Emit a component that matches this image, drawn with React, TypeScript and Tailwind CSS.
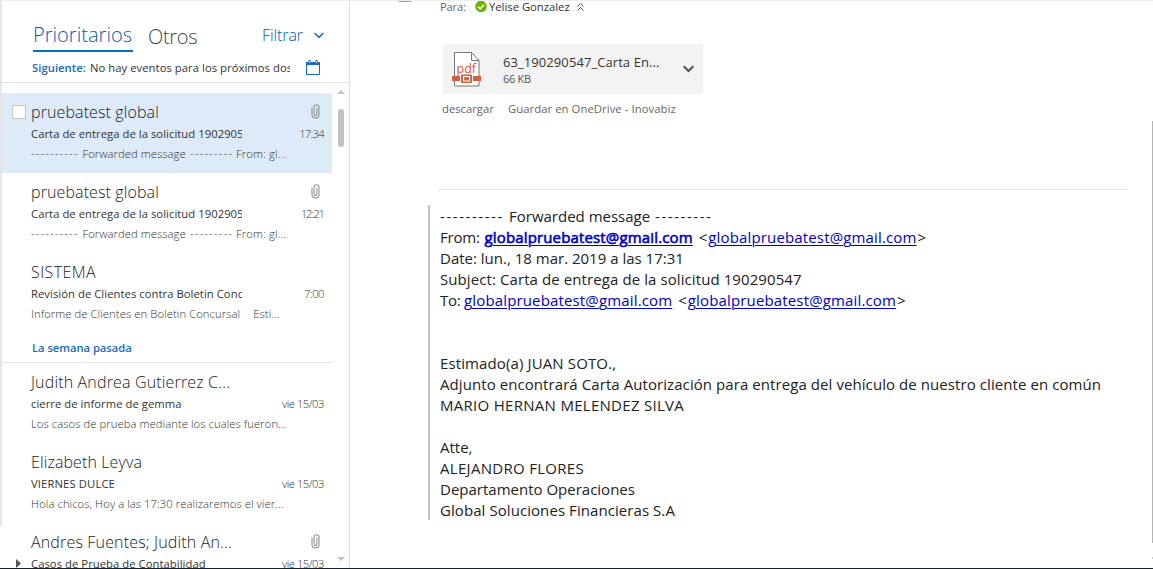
import type { ReactNode } from "react";

function Clip() {
  return (
    <svg className="h-[15px] w-[9px]" viewBox="0 0 9 15" fill="none" stroke="#929292" strokeWidth="1.1">
      <path d="M5.9 4v6.2a1.4 1.4 0 0 1-2.8 0V4.4" />
      <path d="M3.1 4.6V3a2.2 2.2 0 0 1 2.2-2.2A2.7 2.7 0 0 1 8 3.5v6.9a3.5 3.5 0 0 1-7 0V3.6" />
    </svg>
  );
}

type Mail = {
  from: string;
  fromTracking: string;
  subject: string;
  subjectTracking?: string;
  time: string;
  timeTracking: string;
  preview: ReactNode;
  clip?: boolean;
  selected?: boolean;
  thread?: boolean;
};

const forwarded = (
  <div className="flex whitespace-pre">
    <span className="w-[51.5px] tracking-[1.12px]">----------</span>
    <span className="w-[107.5px] tracking-[0.06px]">Forwarded message</span>
    <span className="w-[46px] tracking-[1.15px]">---------</span>
    <span className="tracking-[0.15px]">From: gl...</span>
  </div>
);

const recent: Mail[] = [
  { from: "pruebatest global", fromTracking: "tracking-[0.11px]", subject: "Carta de entrega de la solicitud 190290547", time: "17:34", timeTracking: "tracking-[-0.7px]", preview: forwarded, clip: true, selected: true },
  { from: "pruebatest global", fromTracking: "tracking-[0.11px]", subject: "Carta de entrega de la solicitud 190290547", time: "12:21", timeTracking: "tracking-[-1px]", preview: forwarded, clip: true },
  { from: "SISTEMA", fromTracking: "tracking-[0.4px]", subject: "Revisión de Clientes contra Boletin Concursal", time: "7:00", timeTracking: "tracking-[-0.5px]", preview: <div className="flex gap-[13px] tracking-[0.08px]"><span>Informe de Clientes en Boletin Concursal</span><span>Esti...</span></div> },
];

const older: Mail[] = [
  { from: "Judith Andrea Gutierrez C...", fromTracking: "tracking-[0.16px]", subject: "cierre de informe de gemma", time: "vie 15/03", timeTracking: "tracking-[-0.48px]", preview: "Los casos de prueba mediante los cuales fueron..." },
  { from: "Elizabeth Leyva", fromTracking: "tracking-[0.11px]", subject: "VIERNES DULCE", subjectTracking: "tracking-[0.12px]", time: "vie 15/03", timeTracking: "tracking-[-0.48px]", preview: "Hola chicos, Hoy a las 17:30 realizaremos el vier..." },
  { from: "Andres Fuentes; Judith An...", fromTracking: "tracking-[0.16px]", subject: "Casos de Prueba de Contabilidad", time: "vie 15/03", timeTracking: "tracking-[-0.48px]", preview: "", clip: true, thread: true },
];

function Row({ m }: { m: Mail }) {
  return (
    <div className={"flex h-20 w-[330px] shrink-0 pt-2 " + (m.selected ? "bg-[#dcebf7]" : "")}>
      <div className="w-[29px] shrink-0 pl-[10px]">
        {m.selected && <div className="mt-1 size-[14px] border border-[#c6c6c6] bg-white" />}
        {m.thread && (
          <svg className="mt-[28px] ml-[4px] h-[9px] w-[5px]" viewBox="0 0 5 9">
            <path d="M0 0l5 4.5L0 9z" fill="#555" />
          </svg>
        )}
      </div>
      <div className="w-[293px] whitespace-nowrap text-[11.25px] leading-5">
        <div className="flex h-[23px] items-start justify-between">
          <span className={"text-[16px] leading-[23px] font-light text-[#222] " + m.fromTracking}>{m.from}</span>
          {m.clip && <div className="pt-[3px] pr-[4px]"><Clip /></div>}
        </div>
        <div className="flex h-5 justify-between">
          <div className={"w-[211px] overflow-hidden text-[#333] " + (m.subjectTracking ?? "tracking-[0.05px]")}>{m.subject}</div>
          <div className={"font-light text-[#333] " + m.timeTracking}>{m.time}</div>
        </div>
        <div className="h-5 font-light tracking-[0.07px] text-[#333]">{m.preview}</div>
      </div>
    </div>
  );
}

function Sidebar() {
  return (
    <div className="flex w-[350px] shrink-0 border-r border-[#dcdcdc]">
      <div className="h-[525px] w-[2px] shrink-0 bg-[#e6e6e6]" />
      <div className="flex h-[567px] w-[347px] shrink-0 flex-col overflow-hidden">
        <div className="h-[82px] shrink-0 border-b border-[#e1e1e1]">
          <div className="flex h-[51px] pl-[31px] font-light whitespace-nowrap">
            <div className="mt-[19px] w-[100px] border-b-2 border-[#0072c6] text-[20px] leading-[30px] tracking-[0.03px] text-[#005cb8]">Prioritarios</div>
            <div className="mt-[21px] ml-[15px] w-[114px] text-[20px] leading-[30px] tracking-[-0.3px] text-[#444]">Otros</div>
            <div className="mt-[19px] w-[52px] text-[16px] leading-[30px] tracking-[-0.08px] text-[#005cb8]">Filtrar</div>
            <svg className="mt-[31px] h-[7px] w-[10px]" viewBox="0 0 10 7" fill="none" stroke="#1769c0" strokeWidth="1.5">
              <path d="M.6 1L5 5.4 9.400 1" />
            </svg>
          </div>
          <div className="flex pl-[30px] text-[11.25px] leading-5 whitespace-nowrap">
            <div className="mt-[6px] w-[58px] font-semibold tracking-[0.05px] text-[#1769c0]">Siguiente:</div>
            <div className="mt-[6px] w-[200px] overflow-hidden tracking-[0.05px] text-[#333]">No hay eventos para los próximos dos días</div>
            <svg className="mt-[8px] ml-[16px] h-[15px] w-[14px]" viewBox="0 0 14 15">
              <path d="M.5 2.500h13v12h-13z" fill="none" stroke="#1769c0" />
              <path d="M0 2h14v3H0zM2.500 0h2v2h-2zM9.500 0h2v2h-2z" fill="#1769c0" />
              <path d="M3 1.500h1v1.500H3zM10 1.500h1v1.500h-1z" fill="#fff" />
            </svg>
          </div>
        </div>
        <div className="flex flex-1">
          <div className="w-[330px] pt-[10px]">
            {recent.map((m, i) => <Row key={i} m={m} />)}
            <div className="h-[30px] border-b border-[#e4e4e4] pl-[30px] text-[11.25px] leading-[29px] font-semibold tracking-[-0.05px] text-[#1769c0]">La semana pasada</div>
            {older.map((m, i) => <Row key={i} m={m} />)}
          </div>
          <div className="flex w-[17px] flex-col items-center pt-[7px]">
            <svg className="h-[4px] w-[8px]" viewBox="0 0 8 4"><path d="M0 4l4-4 4 4z" fill="#c4c4c4" /></svg>
            <div className="mt-[15px] h-[38px] w-[6px] rounded-full bg-[#c2c2c2]" />
            <svg className="mt-[410px] h-[4px] w-[8px]" viewBox="0 0 8 4"><path d="M0 0l4 4 4-4z" fill="#c4c4c4" /></svg>
          </div>
        </div>
      </div>
    </div>
  );
}

function PdfIcon() {
  return (
    <svg className="h-[36px] w-[29px]" viewBox="0 0 29 36">
      <path d="M2.500 .5h17l7.500 8v25.500h-24.500z" fill="#fff" stroke="#777" />
      <path d="M19.500 .5v8h7.500" fill="none" stroke="#777" />
      <text x="14.300" y="20.500" textAnchor="middle" fontSize="12.500" fill="#dc5a34" className="font-['Open_Sans',sans-serif]">pdf</text>
      <path d="M0 24h29v5H0z" fill="#d0603f" />
      <path d="M8 21.500h13v10.500H8z" fill="#fff" />
      <path d="M9 22.500h11v8.500H9z" fill="#d0603f" />
      <path d="M11.500 24.500h6v4.500h-6z" fill="none" stroke="#fff" strokeWidth="1.2" />
    </svg>
  );
}

function Address({ bold }: { bold?: boolean }) {
  return (
    <a className={"tracking-[0.15px] text-[#0000cc] underline decoration-1 underline-offset-2 " + (bold ? "[-webkit-text-stroke:0.6px_#0000cc]" : "")}>
      globalpruebatest@gmail.com
    </a>
  );
}

function Quote() {
  return (
    <div className="h-[315px] border-l-2 border-[#c4c4c4] pt-px pl-[10px] text-[15px] leading-[21px] whitespace-nowrap text-[#222] *:h-[21px]">
      <div className="flex">
        <span className="w-[69px] tracking-[1.55px]">----------</span>
        <span className="w-[146px]">Forwarded message</span>
        <span className="tracking-[1.55px]">---------</span>
      </div>
      <div className="flex">
        <span className="w-[44.5px] tracking-[-0.2px]">From:</span>
        <Address bold />
        <span className="ml-[6px] w-[9.500px]">&lt;</span>
        <Address />
        <span className="pl-px">&gt;</span>
      </div>
      <div>Date: lun., 18 mar. 2019 a las 17:31</div>
      <div className="tracking-[0.09px]">Subject: Carta de entrega de la solicitud 190290547</div>
      <div className="flex">
        <span className="w-[24px] tracking-[-0.3px]">To:</span>
        <Address />
        <span className="ml-[6px] w-[9.500px]">&lt;</span>
        <Address />
        <span className="pl-px">&gt;</span>
      </div>
      <div />
      <div />
      <div className="tracking-[0.12px]">Estimado(a) JUAN SOTO.,</div>
      <div className="tracking-[0.075px]">Adjunto encontrará Carta Autorización para entrega del vehículo de nuestro cliente en común</div>
      <div className="tracking-[0.29px]">MARIO HERNAN MELENDEZ SILVA</div>
      <div />
      <div>Atte,</div>
      <div className="tracking-[0.3px]">ALEJANDRO FLORES</div>
      <div>Departamento Operaciones</div>
      <div className="tracking-[0.07px]">Global Soluciones Financieras S.A</div>
    </div>
  );
}

function ReadingPane() {
  return (
    <div className="flex flex-1 justify-between">
      <div className="w-[780px] pl-[48px]">
        <div className="flex h-[43px] whitespace-nowrap text-[11.25px] leading-[11px]">
          <div className="-mt-px h-[2px] w-[14px] rounded-b-full bg-[#c583ca]" />
          <div className="ml-[28px] w-[35px] tracking-[-0.2px] text-[#666]">Para:</div>
          <svg className="h-[12px] w-[12px]" viewBox="0 0 12 12">
            <circle cx="6" cy="5.500" r="5.800" fill="#6bb700" />
            <path d="M3 5.700l2.200 2.200L9 3.800" fill="none" stroke="#fff" strokeWidth="1.6" />
          </svg>
          <div className="ml-[2px] w-[88px] text-[#333]">Yelise Gonzalez</div>
          <svg className="mt-[2px] h-[8px] w-[7px]" viewBox="0 0 7 8" fill="none" stroke="#555">
            <path d="M.5 3.500l3-3 3 3M.5 7.500l3-3 3 3" />
          </svg>
        </div>
        <div className="pl-[44px]">
          <div className="ml-px flex h-[50px] w-[260px] bg-[#f3f3f3] whitespace-nowrap">
            <div className="w-[60px] pt-[8px] pl-[9px]"><PdfIcon /></div>
            <div className="w-[180px] pt-[9px]">
              <div className="text-[13px] leading-[19px] tracking-[0.08px] text-[#333]">63_190290547_Carta En...</div>
              <div className="text-[11px] leading-[14px] tracking-[-0.3px] text-[#555]">66 KB</div>
            </div>
            <svg className="mt-[21px] h-[8px] w-[11px]" viewBox="0 0 11 8" fill="none" stroke="#555" strokeWidth="2">
              <path d="M.7 1.200l4.800 4.800 4.800-4.800" />
            </svg>
          </div>
          <div className="flex pt-[5px] text-[11.25px] leading-5 whitespace-nowrap text-[#666]">
            <div className="w-[66px]">descargar</div>
            <div className="tracking-[0.08px]">Guardar en OneDrive - Inovabiz</div>
          </div>
        </div>
        <div className="mt-[70px] ml-[40px] w-[690px] border-b border-[#e3e3e3]" />
        <div className="mt-[15px] ml-[30px]"><Quote /></div>
      </div>
      <div className="flex w-px flex-col bg-white pt-[120px]">
        <div className="h-[422px] bg-[#b5b5b5]" />
        <div className="mt-[14px] h-[2px] bg-[#cccccc]" />
      </div>
    </div>
  );
}

export default function App() {
  return (
    <div className="flex h-[569px] w-[1153px] flex-col overflow-hidden border-t border-b border-t-[#ececec] border-b-[#14212b] bg-white font-['Open_Sans',sans-serif]">
      <div className="flex h-[567px]">
        <Sidebar />
        <ReadingPane />
      </div>
    </div>
  );
}
